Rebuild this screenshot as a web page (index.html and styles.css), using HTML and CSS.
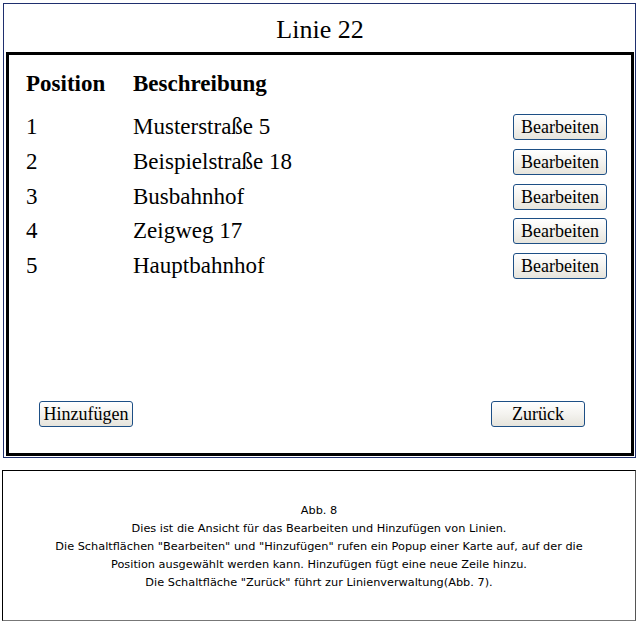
FILE: index.html
```html
<!DOCTYPE html>
<html lang="de">
<head>
<meta charset="utf-8">
<title>Linie 22</title>
<link rel="stylesheet" href="styles.css">
</head>
<body>
<div class="frame">
  <h1 class="title">Linie 22</h1>
  <div class="panel">
    <div class="table">
      <div class="th">Position</div>
      <div class="th">Beschreibung</div>
      <div class="th"></div>

      <div class="td">1</div>
      <div class="td">Musterstraße 5</div>
      <div class="td right"><button class="btn">Bearbeiten</button></div>

      <div class="td">2</div>
      <div class="td">Beispielstraße 18</div>
      <div class="td right"><button class="btn">Bearbeiten</button></div>

      <div class="td">3</div>
      <div class="td">Busbahnhof</div>
      <div class="td right"><button class="btn">Bearbeiten</button></div>

      <div class="td">4</div>
      <div class="td">Zeigweg 17</div>
      <div class="td right"><button class="btn">Bearbeiten</button></div>

      <div class="td">5</div>
      <div class="td">Hauptbahnhof</div>
      <div class="td right"><button class="btn">Bearbeiten</button></div>
    </div>
    <div class="actions">
      <button class="btn">Hinzufügen</button>
      <button class="btn">Zurück</button>
    </div>
  </div>
</div>
<div class="caption">
  <p>Abb. 8<br>
  Dies ist die Ansicht für das Bearbeiten und Hinzufügen von Linien.<br>
  Die Schaltflächen "Bearbeiten" und "Hinzufügen" rufen ein Popup einer Karte auf, auf der die<br>
  Position ausgewählt werden kann. Hinzufügen fügt eine neue Zeile hinzu.<br>
  Die Schaltfläche "Zurück" führt zur Linienverwaltung(Abb. 7).</p>
</div>
</body>
</html>
```

FILE: styles.css
```css
html, body {
  margin: 0;
  padding: 0;
  background: #fff;
}
body {
  font-family: "Liberation Serif", "Times New Roman", serif;
  color: #000;
  padding: 3px 0 0 3px;
}
.frame {
  width: 628px;
  height: 452px;
  border: 1px solid #1f2f6e;
  display: flex;
  flex-direction: column;
  padding: 0 1px 1px 2px;
  box-sizing: content-box;
}
.title {
  margin: 0;
  height: 48px;
  box-sizing: border-box;
  padding-top: 11px;
  font-size: 26px;
  font-weight: normal;
  line-height: 30px;
  text-align: center;
}
.panel {
  flex: 1;
  border: 3px solid #000;
  display: flex;
  flex-direction: column;
  padding: 0 24px 26px 17px;
}
.table {
  display: grid;
  grid-template-columns: 107px 1fr auto;
  grid-template-rows: 54.6px repeat(5, 34.8px);
  align-items: center;
  font-size: 23px;
}
.th {
  font-weight: bold;
  line-height: 30px;
  padding-top: 4px;
}
.td {
  line-height: 26px;
}
.right {
  display: flex;
  justify-content: flex-end;
}
.btn {
  width: 94px;
  height: 26px;
  padding: 0;
  font-family: "Liberation Serif", "Times New Roman", serif;
  font-size: 18px;
  line-height: 24px;
  color: #000;
  border: 1px solid #1d4f85;
  border-radius: 3px;
  background: linear-gradient(#ffffff, #f4f3ef 50%, #e6e4dc);
}
.actions {
  margin-top: auto;
  display: flex;
  justify-content: space-between;
  padding: 0 22px 0 13px;
}
.caption {
  margin: 12px 0 0 -1px;
  width: 632px;
  height: 149px;
  border: 1px solid #000;
  border-bottom-color: #777;
  border-right-color: #555;
  display: flex;
  align-items: flex-start;
  justify-content: center;
}
.caption p {
  margin: 31px 0 0;
  font-family: "DejaVu Sans", sans-serif;
  font-size: 11.3px;
  line-height: 18px;
  text-align: center;
}
```
